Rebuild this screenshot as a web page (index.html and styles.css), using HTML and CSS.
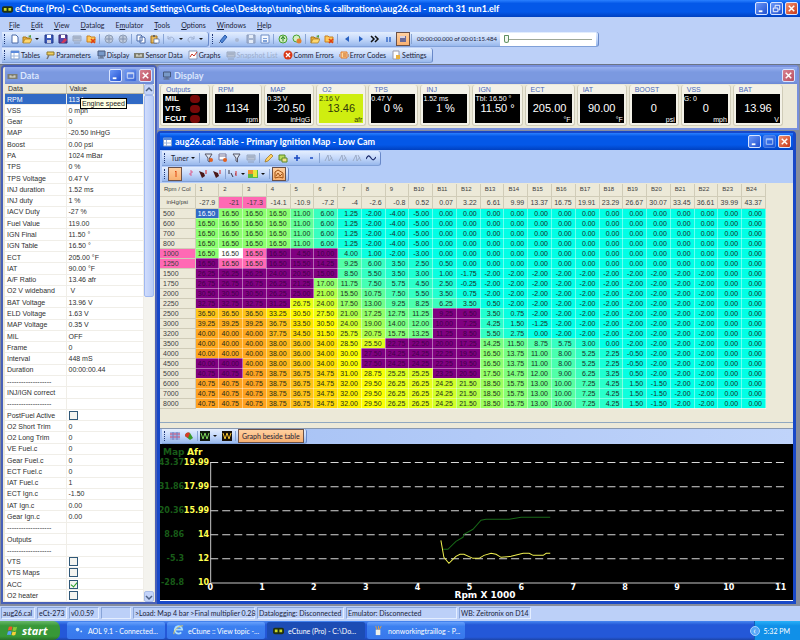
FILE: index.html
```html
<!DOCTYPE html>
<html lang="en">
<head>
  <meta charset="UTF-8">
  <meta name="viewport" content="width=device-width, initial-scale=1.0">
  <title>eCtune (Pro)</title>
  <link rel="stylesheet" href="styles.css">
</head>
<body>
  <svg class="sprite" aria-hidden="true">
    <symbol id="i-new" viewBox="0 0 10 10"><path d="M2 1h4l2 2v6H2z" fill="#fff" stroke="#4a6aa8"/></symbol>
    <symbol id="i-open" viewBox="0 0 10 10"><path d="M1 9V3h3l1 1h3v2" fill="#e8b040" stroke="#a87818"/><path d="M1 9l2-4h7L8 9z" fill="#ffd870" stroke="#a87818" stroke-width=".7"/><path d="M6 2l3-1v3" fill="#50a040"/></symbol>
    <symbol id="i-openx" viewBox="0 0 10 10"><path d="M1 8V2h3l1 1h4v5z" fill="#ffc858" stroke="#c88020"/><path d="M5 5l4 4M9 5L5 9" stroke="#e04010" stroke-width="1.6"/></symbol>
    <symbol id="i-save" viewBox="0 0 10 10"><path d="M1 1h8v8H1z" fill="#3b58b8" stroke="#23388a"/><path d="M3 1h4v3H3z" fill="#fff"/><path d="M3 6h4v3H3z" fill="#ccd"/></symbol>
    <symbol id="i-savegray" viewBox="0 0 10 10"><path d="M1 1h8v8H1z" fill="#a4b4d0" stroke="#8c9cbc"/><path d="M3 1h4v3H3zM3 6h4v3H3z" fill="#e4ecf8"/></symbol>
    <symbol id="i-saveas" viewBox="0 0 10 10"><path d="M1 1h8v8H1z" fill="#5848a8" stroke="#33286a"/><path d="M3 1h4v3H3z" fill="#fff"/><path d="M3 9l4-5 2 2-3 3z" fill="#d03858"/></symbol>
    <symbol id="i-gray" viewBox="0 0 10 10"><path d="M1 2h8v5H1z" fill="#b9c3d4" stroke="#9aa8c0"/><path d="M2 4h6M2 9h6" stroke="#93a2bb"/></symbol>
    <symbol id="i-chip" viewBox="0 0 10 10"><circle cx="5" cy="5" r="4" fill="#c0cbdc" stroke="#8c9cb6"/><path d="M5 2v6M2 5h6" stroke="#8292ae"/></symbol>
    <symbol id="i-copy" viewBox="0 0 10 10"><path d="M1 1h4l1 1v5H1zM4 3h4l1 1v5H4z" fill="#fff" stroke="#4a6aa8"/></symbol>
    <symbol id="i-paste" viewBox="0 0 10 10"><path d="M1 2h6v7H1z" fill="#e8b858" stroke="#a07020"/><path d="M3 1h2v2H3z" fill="#666"/><path d="M4 5h5v4H4z" fill="#fff" stroke="#4a6aa8" stroke-width=".7"/></symbol>
    <symbol id="i-undo" viewBox="0 0 10 10"><path d="M2 2v3h3M2 5c2-3 6-2 6 1 0 1-1 2-2 2" fill="none" stroke="#9fb0d0"/></symbol>
    <symbol id="i-redo" viewBox="0 0 10 10"><path d="M8 2v3H5M8 5c-2-3-6-2-6 1 0 1 1 2 2 2" fill="none" stroke="#9fb0d0"/></symbol>
    <symbol id="i-plug" viewBox="0 0 10 10"><path d="M1 9l2-2" stroke="#667"/><path d="M2 7l5-6 2 2-5 6z" fill="#4f86d6" stroke="#2a5aa8"/></symbol>
    <symbol id="i-dot" viewBox="0 0 10 10"><circle cx="5" cy="6" r="2" fill="#a9b8d2"/></symbol>
    <symbol id="i-note" viewBox="0 0 10 10"><path d="M1 1h8v8H1z" fill="#f4f8ff" stroke="#6d8cc4"/><path d="M3 4h4v1H3zM3 6h4v2H3z" fill="#7da0d8"/></symbol>
    <symbol id="i-go" viewBox="0 0 10 10"><circle cx="5" cy="5" r="4" fill="#d4eec0" stroke="#48a030"/><path d="M5 2.500v5M3 5l2-2.500L7 5" fill="none" stroke="#208020"/></symbol>
    <symbol id="i-nogo" viewBox="0 0 10 10"><circle cx="4.500" cy="4.500" r="3.500" fill="#d4eec0" stroke="#48a030"/><circle cx="7" cy="7" r="2.500" fill="#e08030"/></symbol>
    <symbol id="i-prev" viewBox="0 0 10 10"><path d="M7 2v6L3 5z" fill="#2860c0"/></symbol>
    <symbol id="i-next" viewBox="0 0 10 10"><path d="M3 2v6l4-3z" fill="#2860c0"/></symbol>
    <symbol id="i-ff" viewBox="0 0 10 10"><path d="M1 2l3 3-3 3M5 2l3 3-3 3" fill="none" stroke="#111" stroke-width="1.500"/></symbol>
    <symbol id="i-pause" viewBox="0 0 10 10"><path d="M3 3v5M6 3v5" stroke="#3a6cc8" stroke-width="1.500"/></symbol>
    <symbol id="i-stop" viewBox="0 0 10 10"><path d="M2 2h6v6H2z" fill="#6a6a98"/><path d="M2 2h5v2H2z" fill="#d8d0e0"/></symbol>
    <symbol id="i-grid" viewBox="0 0 10 10"><path d="M1 1h8v8H1z" fill="#fff" stroke="#7f9cc8"/><path d="M1 1h8v2H1z" fill="#5b8adb"/><path d="M1 6h8M4 3v6" stroke="#9db6dc"/></symbol>
    <symbol id="i-param" viewBox="0 0 10 10"><path d="M2 2h7v3H2z" fill="#f0d060" stroke="#907828"/><path d="M4 5l-2 4" stroke="#777" stroke-width="1.500"/></symbol>
    <symbol id="i-disp" viewBox="0 0 10 10"><path d="M2 1h7v5H2z" fill="#7899c8" stroke="#46597c"/><path d="M2 8h6M4 7h3" stroke="#56657f"/></symbol>
    <symbol id="i-sensor" viewBox="0 0 10 10"><path d="M0 3h10v5H0z" fill="#7d7d70"/><path d="M2 5h2M6 5h2M2 6h6" stroke="#e8e8d8"/></symbol>
    <symbol id="i-graph" viewBox="0 0 10 10"><path d="M1 1h8v8H1z" fill="#fff" stroke="#8899b8"/><path d="M2 7l2-3 2 2 3-4" fill="none" stroke="#c83828"/></symbol>
    <symbol id="i-err" viewBox="0 0 10 10"><circle cx="5" cy="5" r="4.500" fill="#d83818"/><path d="M3 3l4 4M7 3L3 7" stroke="#fff" stroke-width="1.300"/></symbol>
    <symbol id="i-code" viewBox="0 0 10 10"><path d="M2 2h6v6H2z" fill="#ffd8a0" stroke="#e07828"/><path d="M0 4v3M10 4v3M4 4h3M4 6h3" stroke="#c86018"/></symbol>
    <symbol id="i-page" viewBox="0 0 10 10"><path d="M2 1h6v8H2z" fill="#fff" stroke="#99a"/><path d="M5 5h4v4H5z" fill="#e8b040"/></symbol>
    <symbol id="i-filter" viewBox="0 0 10 10"><path d="M1 1h7L5.500 5v4L4 8V5z" fill="#dfe6f2" stroke="#556"/></symbol>
    <symbol id="i-filterx" viewBox="0 0 10 10"><path d="M1 1h7L5.500 5v4L4 8V5z" fill="#dfe6f2" stroke="#556"/><circle cx="7" cy="7" r="2" fill="#e06020"/></symbol>
    <symbol id="i-gridx" viewBox="0 0 10 10"><path d="M1 1h7v6H1z" fill="#fff" stroke="#779"/><path d="M1 3h7" stroke="#779"/><circle cx="7" cy="7" r="2" fill="#e06020"/></symbol>
    <symbol id="i-pencil" viewBox="0 0 10 10"><path d="M1 9l1-3 5-5 2 2-5 5z" fill="#ffd060" stroke="#a07828" stroke-width=".8"/></symbol>
    <symbol id="i-map" viewBox="0 0 10 10"><path d="M1 2h6v5H1z" fill="#b8dc60" stroke="#5a8828"/><path d="M4 5h5v4H4z" fill="#f4e088" stroke="#5a8828"/></symbol>
    <symbol id="i-plus" viewBox="0 0 10 10"><path d="M2 5h6M5 2v6" stroke="#1848c0" stroke-width="1.500"/></symbol>
    <symbol id="i-minus" viewBox="0 0 10 10"><path d="M4 5h3" stroke="#1848c0" stroke-width="1.500"/></symbol>
    <symbol id="i-cut" viewBox="0 0 10 10"><path d="M1 8l3-6 1 6 3-4M6 2l3 6" fill="none" stroke="#9cabc6"/></symbol>
    <symbol id="i-wave" viewBox="0 0 10 10"><path d="M0 6c2-4 3-4 5-1s3 2 5-1" fill="none" stroke="#182868" stroke-width="1.200"/></symbol>
    <symbol id="i-one" viewBox="0 0 10 10"><path d="M5 3l1-1v6" fill="none" stroke="#e04810"/></symbol>
    <symbol id="i-two" viewBox="0 0 10 10"><path d="M6 2h2v2H6v2h2" fill="none" stroke="#e04878" stroke-width=".8"/></symbol>
    <symbol id="i-cam" viewBox="0 0 10 10"><path d="M1 2l5 2 1 3-3 2z" fill="#4a1818"/><path d="M8 1v4" stroke="#d82020"/></symbol>
    <symbol id="i-cur" viewBox="0 0 10 10"><path d="M1 1v4M3 4l2 4M7 5h1" stroke="#334"/><path d="M8 2v5" stroke="#d82020"/></symbol>
    <symbol id="i-heat" viewBox="0 0 10 10"><path d="M0 1h10v8H0z" fill="#58b848"/><path d="M0 1h5v4H0z" fill="#f09030"/><path d="M5 1h4v7H5z" fill="#e8e838"/></symbol>
    <symbol id="i-3d" viewBox="0 0 10 10"><path d="M1 3l3-2 5 3v5L5 8 1 9z" fill="none" stroke="#a05010"/><path d="M2 7l2-3 2 3 2-2" fill="none" stroke="#a05010"/></symbol>
    <symbol id="i-surf" viewBox="0 0 10 10"><path d="M0 1h10v8H0z" fill="#9fb0e0"/><path d="M0 3h10M0 6h10" stroke="#e05070"/><path d="M3 1v8M7 1v8" stroke="#6880c8"/></symbol>
    <symbol id="i-ball" viewBox="0 0 10 10"><path d="M1 5c0-4 4-4 5-3l3 5-3 2z" fill="#389828"/><path d="M1 5c0-4 4-4 5-3L4 7z" fill="#d83828"/></symbol>
    <symbol id="i-scope" viewBox="0 0 10 10"><path d="M0 0h10v10H0z" fill="#101810"/><path d="M1 2l2 6 2-6 2 6 2-6" fill="none" stroke="#78d058"/></symbol>
    <symbol id="i-scopey" viewBox="0 0 10 10"><path d="M0 0h10v10H0z" fill="#181008"/><path d="M1 2l2 6 2-6 2 6 2-6" fill="none" stroke="#f0c030"/></symbol>
    <symbol id="i-app" viewBox="0 0 12 10"><rect y="2" width="12" height="7" rx="2" fill="#203010"/><path d="M2 4h3v3H2zM7 4h3v3H7z" fill="#c8d828"/></symbol>
    <symbol id="i-flag" viewBox="0 0 12 12"><path d="M2 2q2-1 4 0L5 6Q3 5 1 6z" fill="#f05828"/><path d="M7 2q2 1 4 0l-1 4q-2 1-4 0z" fill="#88cc38"/><path d="M1 7q2-1 4 0l-1 4q-2-1-4 0z" fill="#58a0f8"/><path d="M6 7q2 1 4 0l-1 4q-2 1-4 0z" fill="#f8d038"/></symbol>
    <symbol id="i-ie" viewBox="0 0 12 12"><path d="M9 8a4 4 0 1 1 1-3H3" fill="none" stroke="#a8dcff" stroke-width="2"/><path d="M1 10C0 6 7 0 11 1" fill="none" stroke="#f0d050"/></symbol>
    <symbol id="i-aol" viewBox="0 0 12 12"><circle cx="5" cy="5" r="2" fill="#d0e8ff"/><circle cx="9" cy="7" r="1" fill="#d0e8ff"/></symbol>
    <symbol id="i-paint" viewBox="0 0 12 12"><path d="M3 5h5v6H3z" fill="#f0f0e8"/><path d="M4 5L3 1M6 5V1M7 5l2-4" stroke="#e0a040"/></symbol>
    <symbol id="i-min" viewBox="0 0 12 12"><path d="M3 9h4" stroke="#fff" stroke-width="2"/></symbol>
    <symbol id="i-max" viewBox="0 0 12 12"><path d="M2.500 3h7v6h-7zM2.500 4h7" fill="none" stroke="#fff"/></symbol>
    <symbol id="i-rest" viewBox="0 0 12 12"><path d="M4.500 5V2.500h5v5H8M2.500 5.500h5v4h-5z" fill="none" stroke="#fff"/></symbol>
    <symbol id="i-close" viewBox="0 0 12 12"><path d="M3 3l6 6M9 3L3 9" stroke="#fff" stroke-width="1.600"/></symbol>
  </svg>

  <header class="titlebar main-title">
    <svg class="app-icon"><use href="#i-app"/></svg>
    <h1>eCtune (Pro) - C:\Documents and Settings\Curtis Coles\Desktop\tuning\bins &amp; calibrations\aug26.cal - march 31 run1.elf</h1>
    <button class="win-btn" aria-label="Minimize"><svg><use href="#i-min"/></svg></button>
    <button class="win-btn" aria-label="Restore"><svg><use href="#i-rest"/></svg></button>
    <button class="win-btn close" aria-label="Close"><svg><use href="#i-close"/></svg></button>
  </header>

  <nav class="menu">
    <a href="#"><u>F</u>ile</a><a href="#"><u>E</u>dit</a><a href="#"><u>V</u>iew</a><a href="#"><u>D</u>atalog</a><a href="#">E<u>m</u>ulator</a><a href="#"><u>T</u>ools</a><a href="#"><u>O</u>ptions</a><a href="#"><u>W</u>indows</a><a href="#"><u>H</u>elp</a>
  </nav>

  <div class="bar-row">
    <div class="toolbar" data-icons="new open* save saveas gray openx | chip chip | copy paste | undo* redo*"></div>
    <div class="toolbar" data-icons="plug dot savegray note | go nogo | open openx | prev next ff pause stop! |">
      <label class="time" for="seek">00:00:00.000 of 00:01:15.484</label>
      <input type="range" id="seek" min="0" max="75" value="0">
    </div>
  </div>
  <div class="bar-row">
    <div class="toolbar labelled">
      <button><svg><use href="#i-grid"/></svg>Tables</button>
      <button><svg><use href="#i-param"/></svg>Parameters</button>
      <button><svg><use href="#i-disp"/></svg>Display</button>
      <button><svg><use href="#i-sensor"/></svg>Sensor Data</button>
      <button><svg><use href="#i-graph"/></svg>Graphs</button>
      <button disabled><svg><use href="#i-gray"/></svg>Snapshot List</button>
      <button><svg><use href="#i-err"/></svg>Comm Errors</button>
      <button><svg><use href="#i-code"/></svg>Error Codes</button>
      <button><svg><use href="#i-page"/></svg>Settings</button>
    </div>
  </div>

  <main class="mdi">
    <section class="window inactive data-window">
      <div class="titlebar">
        <svg class="app-icon"><use href="#i-sensor"/></svg>
        <h2>Data</h2>
        <button class="win-btn" aria-label="Minimize"><svg><use href="#i-min"/></svg></button>
        <button class="win-btn dim" aria-label="Maximize"><svg><use href="#i-max"/></svg></button>
        <button class="win-btn close" aria-label="Close"><svg><use href="#i-close"/></svg></button>
      </div>
      <div class="data-body">
        <table class="data-table">
          <thead><tr><th>Data</th><th>Value</th></tr></thead>
          <tbody id="dataRows"></tbody>
        </table>
        <div class="scroll">
          <button aria-label="Scroll up"><svg viewBox="0 0 8 8"><path d="M1 5l3-3 3 3" fill="none" stroke="#4d6185" stroke-width="1.500"/></svg></button>
          <div class="thumb"></div>
          <button aria-label="Scroll down"><svg viewBox="0 0 8 8"><path d="M1 3l3 3 3-3" fill="none" stroke="#4d6185" stroke-width="1.500"/></svg></button>
        </div>
        <div class="tooltip">Engine speed</div>
      </div>
    </section>

    <div class="right">
      <section class="window inactive">
        <div class="titlebar">
          <svg class="app-icon"><use href="#i-disp"/></svg>
          <h2>Display</h2>
          <button class="win-btn close" aria-label="Close"><svg><use href="#i-close"/></svg></button>
        </div>
        <div class="gauges" id="gauges">
          <div class="group">
            <h3>Outputs</h3>
            <ul class="outputs"><li>MIL</li><li>VTS</li><li>FCUT</li></ul>
          </div>
        </div>
      </section>

      <section class="window active table-window">
        <div class="titlebar">
          <svg class="app-icon"><use href="#i-grid"/></svg>
          <h2>aug26.cal: Table - Primary Ignition Map - Low Cam</h2>
          <button class="win-btn" aria-label="Minimize"><svg><use href="#i-min"/></svg></button>
          <button class="win-btn dim" aria-label="Maximize"><svg><use href="#i-max"/></svg></button>
          <button class="win-btn close" aria-label="Close"><svg><use href="#i-close"/></svg></button>
        </div>
        <div class="table-tools">
          <div class="toolbar" data-icons="Tuner* | filterx gridx filter gray | pencil map plus minus | cut cut cut wave"></div>
          <div class="toolbar" data-icons="one! two cam cam | cur* heat* | 3d!"></div>
        </div>
        <div class="map-area">
          <table class="map">
            <thead id="mapHead"></thead>
            <tbody id="mapRows"></tbody>
          </table>
        </div>
        <div class="graph-tools">
          <div class="toolbar" data-icons="surf ball | scope* scopey |"><button class="on text">Graph beside table</button></div>
        </div>
        <svg class="chart" id="chart" viewBox="0 0 631 156" role="img" aria-label="Map and Afr by rpm"></svg>
      </section>
    </div>
  </main>

  <footer class="status">
    <span>aug26.cal</span><span>eCt-273</span><span>v0.0.59</span><span></span><span>&gt;Load: Map 4 bar &gt;Final multiplier 0.28</span><span>Datalogging: Disconnected</span><span>Emulator: Disconnected</span><span>WB: Zeitronix on D14</span>
  </footer>

  <div class="taskbar">
    <button class="start"><svg><use href="#i-flag"/></svg>start</button>
    <button class="task"><svg><use href="#i-aol"/></svg>AOL 9.1 - Connected...</button>
    <button class="task"><svg><use href="#i-ie"/></svg>eCtune :: View topic -...</button>
    <button class="task current"><svg><use href="#i-app"/></svg>eCtune (Pro) - C:\Do...</button>
    <button class="task"><svg><use href="#i-paint"/></svg>nonworkingtraillog - P...</button>
    <div class="tray"><button class="expand" aria-label="Show hidden icons">&lsaquo;</button><time>5:32 PM</time></div>
  </div>

  <script src="script.js"></script>
</body>
</html>
```
FILE: styles.css
```css
* {
  box-sizing: border-box;
}
body {
  margin: 0;
  min-height: 100vh;
  display: flex;
  flex-direction: column;
  background: #bcd0f8;
  font-family: Lato, "Open Sans", sans-serif;
  font-size: 7px;
  line-height: 10px;
  color: #1a2238;
}
h1, h2, h3, ul {
  margin: 0;
  padding: 0;
  font: inherit;
}
button {
  font: inherit;
  color: inherit;
  background: none;
  border: 0;
  padding: 0;
}
.sprite {
  display: none;
}

/* title bars */
.titlebar {
  display: flex;
  align-items: center;
  gap: 2px;
  height: 17px;
  padding: 0 2px;
  background: linear-gradient(#2a80ff, #0458e8 20%, #0458e8 70%, #0040c0);
  color: #fff;
  font-weight: bold;
  font-size: 9px;
  line-height: 14px;
  white-space: nowrap;
}
.titlebar h1, .titlebar h2 {
  flex: 1;
  overflow: hidden;
}
.app-icon {
  width: 11px;
  height: 10px;
}
.win-btn {
  width: 13px;
  height: 13px;
  border: 1px solid #d8e4ff;
  border-radius: 2px;
  background: linear-gradient(135deg, #6c98f8, #2050d0);
}
.win-btn svg {
  display: block;
  width: 11px;
  height: 11px;
}
.win-btn.close {
  background: linear-gradient(135deg, #f09070, #c83818);
}
.inactive .win-btn.close {
  background: linear-gradient(135deg, #d88090, #b85060);
}
.win-btn.dim {
  border-color: #6c94e8;
  opacity: 0.7;
}

/* menu and toolbars */
.menu {
  display: flex;
  height: 15px;
  padding: 3px 9px 0;
  gap: 11px;
}
.menu a {
  color: #1a2238;
  text-decoration: none;
}
.bar-row {
  display: flex;
  gap: 1px;
  height: 16px;
  padding-left: 2px;
}
.toolbar {
  display: flex;
  align-items: center;
  height: 15px;
  padding-right: 2px;
  background: linear-gradient(#e4eefe, #c4d8fa 50%, #98b8ec);
  border-right: 1px solid #6888c8;
  border-bottom: 1px solid #80a0d8;
  border-radius: 0 3px 3px 0;
}
.toolbar::before {
  content: "";
  width: 1px;
  height: 10px;
  margin: 0 2px;
  border-left: 1px dotted #203878;
}
.toolbar button {
  display: flex;
  align-items: center;
  justify-content: center;
  min-width: 14px;
  height: 14px;
  white-space: nowrap;
}
.toolbar button svg {
  width: 10px;
  height: 10px;
  flex: none;
}
.toolbar .drop {
  padding-right: 3px;
}
.toolbar .drop::after {
  content: "";
  margin-left: 3px;
  border: 2px solid transparent;
  border-top-color: #111;
  border-bottom: 0;
}
.toolbar .on {
  background: linear-gradient(#ffd0a0, #f8b070);
  border: 1px solid #6a5048;
}
.toolbar .text {
  padding: 0 3px;
}
.toolbar hr {
  width: 1px;
  height: 10px;
  margin: 0 2px 0 1px;
  border: 0;
  background: #88a4d4;
}
.labelled button {
  padding: 0 3px 0 2px;
  gap: 1px;
}
.labelled button:disabled {
  color: #9aaccb;
}
.time {
  padding: 0 3px;
  font-size: 6px;
}
#seek {
  appearance: none;
  width: 96px;
  height: 13px;
  margin: 0;
  padding: 0 4px;
  background: #fff;
}
#seek::-webkit-slider-runnable-track {
  height: 1px;
  background: #a0a898;
}
#seek::-webkit-slider-thumb {
  appearance: none;
  width: 5px;
  height: 8px;
  margin-top: -4px;
  background: #f4f8f0;
  border: 1px solid #609060;
  border-radius: 1px 1px 3px 3px;
}

/* windows */
.mdi {
  flex: 1;
  display: flex;
  padding: 0 1px 2px;
  background: #858c9c;
  border-top: 1px solid #6c7484;
}
.window {
  display: flex;
  flex-direction: column;
  border: 2px solid #7890dc;
  border-radius: 4px 4px 0 0;
  background: #ece9d8;
}
.inactive > .titlebar {
  background: linear-gradient(#98b0f0, #7b99e0 30%, #7b99e0 80%, #6c88d4);
  color: #dce6fc;
}
.window.active {
  border: 3px solid #1848c8;
  border-top-width: 2px;
}
.right {
  flex: 1;
  min-width: 0;
  display: flex;
  flex-direction: column;
}

/* sensor list */
.data-window {
  width: 156px;
  padding: 0 1px 0 2px;
  border-color: #4860b8;
}
.data-body {
  position: relative;
  flex: 1;
  display: flex;
  background: #fff;
}
.data-table {
  flex: 1;
  border-collapse: collapse;
  table-layout: fixed;
  font-family: "Liberation Sans", sans-serif;
  line-height: 9px;
  color: #303030;
}
.data-table th {
  background: #ece9d8;
  border-bottom: 1px solid #b8b4a0;
  border-right: 1px solid #c8c4b0;
  text-align: left;
  font-weight: normal;
  padding: 0 3px;
}
.data-table td {
  padding: 0 2px;
  border: 1px solid #f0eee8;
  border-left: 0;
  white-space: nowrap;
}
.data-table th:first-child {
  width: 61px;
}
.data-table .selected td {
  background: #316ac5;
  color: #fff;
}
.data-table input {
  appearance: none;
  display: block;
  width: 9px;
  height: 9px;
  margin: 0;
  border: 1px solid #305878;
  background: #f4f4f0;
}
.data-table input:checked::before {
  content: "";
  display: block;
  width: 3px;
  height: 5px;
  margin: 0 2px;
  border: solid #28a028;
  border-width: 0 1px 1px 0;
  transform: rotate(40deg);
}
.scroll {
  width: 10px;
  display: flex;
  flex-direction: column;
  background: #f4f3ee;
}
.scroll button {
  height: 11px;
  background: #c4d4fa;
  border: 1px solid #a8bce8;
  border-radius: 2px;
}
.scroll svg {
  display: block;
  width: 8px;
  height: 8px;
}
.thumb {
  height: 202px;
  margin-bottom: auto;
  background: linear-gradient(90deg, #d0dcfc, #b8ccf8);
  border: 1px solid #a0b8f0;
  border-radius: 2px;
}
.tooltip {
  position: absolute;
  left: 75px;
  top: 14px;
  padding: 0 1px;
  background: #ffffe1;
  border: 1px solid #000;
  color: #222;
  font-family: "Liberation Sans", sans-serif;
  line-height: 9px;
}

/* gauges */
.gauges {
  display: flex;
  gap: 2px;
  padding: 1px 14px 2px 1px;
  font-family: "Liberation Sans", sans-serif;
}
.group {
  flex: 1;
  min-width: 0;
  padding: 0 2px 2px;
  border: 1px solid #d0ccb8;
  border-top: 0;
  border-radius: 3px;
  background: #f4f2e8;
}
.group h3 {
  padding-left: 3px;
  color: #4868b8;
  line-height: 9px;
}
.gauge, .outputs {
  height: 29px;
  background: #000;
  color: #fff;
}
.gauge {
  display: grid;
  grid-template-rows: 7px 14px 8px;
  line-height: 9px;
  white-space: nowrap;
}
.gauge strong {
  text-align: center;
  font-size: 11px;
  font-weight: normal;
  line-height: 14px;
}
.gauge em {
  font-style: normal;
  text-align: right;
  padding-right: 1px;
}
.gauge.lime {
  background: #cfee10;
  color: #303808;
}
.outputs {
  list-style: none;
  padding: 0 7px 0 2px;
  font-size: 8px;
  font-weight: bold;
}
.outputs li {
  display: flex;
  align-items: center;
  justify-content: space-between;
}
.outputs li::after {
  content: "";
  width: 10px;
  height: 8px;
  border-radius: 4px;
  background: #780808;
}

/* ignition map */
.table-window {
  flex: 1;
  margin: 1px 3px 0 0;
}
.table-tools {
  display: flex;
  flex-direction: column;
  align-items: flex-start;
  gap: 1px;
  padding: 1px 2px;
  background: #b4ccf8;
}
.map-area {
  flex: 1;
  padding: 1px 27px 12px 0;
  border-bottom: 1px solid #90a8c0;
}
.map {
  width: 100%;
  border-collapse: collapse;
  table-layout: fixed;
  font-family: "Liberation Sans", sans-serif;
  line-height: 9px;
  color: #1c2c1c;
}
.map th, .map td {
  height: 10px;
  padding: 0 3px 0 0;
  border-right: 1px solid rgba(255, 255, 255, 0.4);
  border-bottom: 1px solid rgba(255, 255, 255, 0.4);
  text-align: right;
  font-weight: normal;
  white-space: nowrap;
}
.map th {
  background: #ece9d8;
  border-color: #d0ccb8;
  color: #404040;
}
.map thead th {
  height: 12px;
}
.map thead tr:first-child th {
  padding-left: 4px;
  text-align: left;
  font-size: 6px;
}
.map th:first-child {
  width: 35px;
  padding-left: 3px;
  text-align: left;
}
.map thead tr th:first-child {
  padding: 0;
  text-align: center;
  font-size: 6px;
}
.map .pink {
  background: #ff69b4;
}
.map .logged {
  background: #800080;
  color: #400048;
}
.map .cell-on {
  background: #316ac5;
  color: #fff;
}
.map .cell-now {
  background: #fff;
}

/* graph */
.graph-tools {
  margin-top: 5px;
  padding-left: 2px;
  display: flex;
  background: linear-gradient(90deg, #a4c0f4, #c0d4fa);
  border-top: 1px solid #8898b0;
}
.chart {
  display: block;
  width: 100%;
  background: #000;
  border-bottom: 1px solid #fff;
  font-family: "DejaVu Sans", sans-serif;
  font-weight: bold;
  font-size: 8px;
}
.chart .title {
  font-size: 9px;
}
.chart .map-label {
  fill: #185c18;
}
.chart .afr-label {
  fill: #ffff50;
}
.chart .x-label {
  fill: #fff;
}
.chart .axis {
  stroke: #c8c8c8;
}
.chart .dashes {
  stroke: #d8d8d8;
  stroke-dasharray: 8 4;
}
.chart polyline {
  fill: none;
}
.chart .map-line {
  stroke: #186818;
}
.chart .afr-line {
  stroke: #f0f050;
}

/* bottom bars */
.status {
  display: flex;
  gap: 2px;
  height: 15px;
  padding: 1px;
}
.status span {
  width: 30px;
  height: 12px;
  padding-left: 1px;
  border: 1px solid #88a4d8;
  border-right-color: #e4eeff;
  border-bottom-color: #e4eeff;
  white-space: nowrap;
}
.status span:nth-child(1) {
  width: 34px;
}
.status span:nth-child(5) {
  width: 122px;
}
.status span:nth-child(6) {
  width: 87px;
}
.status span:nth-child(7) {
  width: 111px;
}
.status span:nth-child(8) {
  width: 72px;
}
.taskbar {
  display: flex;
  height: 19px;
  gap: 2px;
  background: linear-gradient(#4888f0, #2458d8 20%, #2458d8 85%, #1c44a8);
  color: #fff;
}
.taskbar svg {
  width: 11px;
  height: 11px;
  flex: none;
}
.start {
  display: flex;
  align-items: center;
  gap: 4px;
  width: 60px;
  margin-right: 5px;
  padding-left: 7px;
  background: linear-gradient(#68b868, #389838 25%, #389838 80%, #287028);
  border-radius: 0 7px 7px 0;
  font-family: "Open Sans", sans-serif;
  font-size: 11px;
  font-weight: bold;
  font-style: italic;
}
.task {
  display: flex;
  align-items: center;
  gap: 4px;
  width: 98px;
  margin: 1px 0;
  padding-left: 6px;
  background: linear-gradient(#68a0fc, #3c80f0 25%, #3878ec);
  border-radius: 2px;
  white-space: nowrap;
}
.task.current {
  background: #1c4cb4;
}
.tray {
  display: flex;
  align-items: center;
  gap: 4px;
  margin-left: auto;
  padding-right: 10px;
  background: linear-gradient(#28b0f8, #1090e8 25%, #1090e8);
  border-left: 1px solid #1060b8;
}
.expand {
  width: 10px;
  height: 10px;
  margin-left: -5px;
  border-radius: 5px;
  background: #58a8f8;
  border: 1px solid #a8d4ff;
  font-size: 9px;
  line-height: 6px;
}
```
FILE: script.js
```js
const SVG_NS = "http://www.w3.org/2000/svg";

// Toolbars: "|" is a separator, "*" adds a drop arrow, "!" is pressed
document.querySelectorAll("[data-icons]").forEach((bar) => {
  const html = bar.dataset.icons.split(" ").map((item) => {
    if (item === "|") return "<hr>";
    const name = item.replace(/[*!]/, "");
    let cls = "";
    if (item.endsWith("*")) cls = "drop";
    if (item.endsWith("!")) cls = "on";
    if (name === "Tuner") return `<button class="${cls} text">Tuner</button>`;
    return `<button class="${cls}" aria-label="${name}"><svg><use href="#i-${name}"/></svg></button>`;
  }).join("");
  bar.insertAdjacentHTML("afterbegin", html);
});

// Sensor list
const sensors = [
  ["RPM", "1134"], ["VSS", "0 mph"], ["Gear", "0"], ["MAP", "-20.50 inHgG"], ["Boost", "0.00 psi"],
  ["PA", "1024 mBar"], ["TPS", "0 %"], ["TPS Voltage", "0.47 V"], ["INJ duration", "1.52 ms"],
  ["INJ duty", "1 %"], ["IACV Duty", "-27 %"], ["Fuel Value", "119.00"], ["IGN Final", "11.50 °"],
  ["IGN Table", "16.50 °"], ["ECT", "205.00 °F"], ["IAT", "90.00 °F"], ["A/F Ratio", "13.46 afr"],
  ["O2 V wideband", "&nbsp;V"], ["BAT Voltage", "13.96 V"], ["ELD Voltage", "1.63 V"], ["MAP Voltage", "0.35 V"],
  ["MIL", "OFF"], ["Frame", "0"], ["Interval", "448 mS"], ["Duration", "00:00:00.44"],
  ["-------------------", ""], ["INJ/IGN correct", ""], ["-------------------", ""],
  ["PostFuel Active", false], ["O2 Short Trim", "0"], ["O2 Long Trim", "0"], ["VE Fuel.c", "0"],
  ["Gear Fuel.c", "0"], ["ECT Fuel.c", "0"], ["IAT Fuel.c", "1"], ["ECT Ign.c", "-1.50"],
  ["IAT Ign.c", "0.00"], ["Gear Ign.c", "0.00"],
  ["-------------------", ""], ["Outputs", ""], ["-------------------", ""],
  ["VTS", false], ["VTS Maps", false], ["ACC", true], ["O2 heater", false],
];
document.getElementById("dataRows").innerHTML = sensors.map(([name, value], i) => {
  if (typeof value === "boolean") {
    return `<tr><td><label for="s${i}">${name}</label></td><td><input type="checkbox" id="s${i}"${value ? " checked" : ""}></td></tr>`;
  }
  return `<tr${i === 0 ? ' class="selected"' : ""}><td>${name}</td><td>${value}</td></tr>`;
}).join("");

// Gauges: label, top text, value, unit
const gauges = [
  ["RPM", "", "1134", "rpm"], ["MAP", "0.35 V", "-20.50", "inHgG"], ["O2", "2.16 V", "13.46", "afr"],
  ["TPS", "0.47 V", "0 %", ""], ["INJ", "1.52 ms", "1 %", ""], ["IGN", "Tbl: 16.50 °", "11.50 °", ""],
  ["ECT", "", "205.00", "°F"], ["IAT", "", "90.00", "°F"], ["BOOST", "", "0", "psi"],
  ["VSS", "G: 0", "0", "mph"], ["BAT", "", "13.96", "V"],
];
document.getElementById("gauges").insertAdjacentHTML("beforeend", gauges.map(([label, note, value, unit]) => `
  <div class="group">
    <h3>${label}</h3>
    <div class="gauge${label === "O2" ? " lime" : ""}"><span>${note}</span><strong>${value}</strong><em>${unit}</em></div>
  </div>`).join(""));

// Ignition map, "p" marks the cells already logged
const load = "-27.9 -21 -17.3 -14.1 -10.9 -7.2 -4 -2.6 -0.8 0.52 0.07 3.22 6.61 9.99 13.37 16.75 19.91 23.29 26.67 30.07 33.45 36.61 39.99 43.37".split(" ");
const lowRpm = "16.5 16.5 16.5 16.5 11 6 1.25 -2 -4 -5 0 0 0 0 0 0 0 0 0 0 0 0 0 0";
const highRpm = "40.75 40.75 40.75 38.75 36.75 34.75 32 29.5 26.25 26.25 24.25 21.5 18.5 15.75 13 10 7.25 4.25 1.5 -1.5 -2 -2 0 0";
const ignition = [
  [500, lowRpm], [600, lowRpm], [700, lowRpm], [800, lowRpm],
  [1000, "16.5 16.5 16.5 p16.5 p4.5 p10 4 1 -2 -3 0 0 0 0 0 0 0 0 0 0 0 0 0 0"],
  [1250, "p16.5 16.5 16.5 p16.5 p15.5 p14.25 9.25 6 3.5 2.5 0.5 0 0 0 0 0 0 0 0 0 0 0 0 0"],
  [1500, "p26.25 p26.25 p26.25 p24 p20.5 p15 8.5 5.5 3.5 3 1 -1.75 -2 -2 -2 -2 -2 -2 -2 -2 -2 -2 0 0"],
  [1750, "p26.75 p26.75 p26.75 p26.25 p21.25 17 11.75 7.5 5.75 4.5 2.5 -0.25 -2 -2 -2 -2 -2 -2 -2 -2 -2 -2 0 0"],
  [2000, "p30.5 p30.5 p30.5 p26.25 p25 21 15.5 10.75 7.5 5.5 3.5 0.75 -2 -2 -2 -2 -2 -2 -2 -2 -2 -2 0 0"],
  [2250, "p32.75 p32.75 p32.75 p31.25 26.75 24 17.5 13 9.25 8.25 6.25 3.5 0.5 -2 -2 -2 -2 -2 -2 -2 -2 -2 0 0"],
  [2500, "36.5 36.5 36.5 33.25 30.5 27.5 21 17.25 12.75 11.25 p9.25 p6.5 3.5 0.75 -2 -2 -2 -2 -2 -2 -2 -2 0 0"],
  [3000, "39.25 39.25 39.25 36.75 33.5 30.5 24 19 14 12 p10 p7.25 4.25 1.5 -1.25 -2 -2 -2 -2 -2 -2 -2 0 0"],
  [3200, "40 40 40 37.75 34.5 31.5 25.75 20.75 15.75 13.25 p11.25 p8.5 5.5 2.75 0 -2 -2 -2 -2 -2 -2 -2 0 0"],
  [3500, "40 40 40 38 36 34 28.5 25.5 p22.75 p22.5 p20 p17.25 14.25 11.5 8.75 5.75 3 0 -2 -2 -2 -2 0 0"],
  [4000, "40 40 40 38 36 34 30 p27.5 p24.25 p24.25 p22.25 p19.5 16.5 13.75 11 8 5.25 2.25 -0.5 -2 -2 -2 0 0"],
  [4500, "p40 p40 40 38 36 34 30 p27.5 p24.25 p24.25 p22.25 p19.5 16.5 13.75 11 8 5.25 2.25 -0.5 -2 -2 -2 0 0"],
  [5000, "p40.75 p40.75 40.75 38.75 36.75 34.75 31 28.75 25.25 25.25 p23.25 p20.5 17.5 14.75 12 9 6.25 3.25 0.5 -2 -2 -2 0 0"],
  [6000, highRpm], [7000, highRpm], [8000, highRpm],
];

const stops = [
  [0, 0, 255, 230], [6, 56, 255, 192], [11, 96, 255, 152], [16.5, 140, 255, 112],
  [21, 176, 255, 72], [26, 228, 255, 24], [30, 255, 255, 0], [34, 255, 224, 0],
  [36.5, 255, 196, 24], [41, 255, 160, 32],
];

function heat(value) {
  if (value <= 0) return "rgb(0, 255, 230)";
  const i = stops.findIndex((s) => s[0] >= value);
  const a = stops[i - 1];
  const b = stops[i];
  const t = (value - a[0]) / (b[0] - a[0]);
  const mix = (n) => Math.round(a[n] + (b[n] - a[n]) * t);
  return `rgb(${mix(1)}, ${mix(2)}, ${mix(3)})`;
}

document.getElementById("mapHead").innerHTML =
  "<tr><th>Rpm / Col</th>" + load.map((_, i) => `<th>${i > 8 ? "B" : ""}${i + 1}</th>`).join("") + "</tr>" +
  "<tr><th>inHg/psi</th>" + load.map((v, i) => `<th${i === 1 || i === 2 ? ' class="pink"' : ""}>${v}</th>`).join("") + "</tr>";

document.getElementById("mapRows").innerHTML = ignition.map(([rpm, line]) => {
  const near = rpm === 1000 || rpm === 1250;
  const cells = line.split(" ").map((cell, col) => {
    const logged = cell.startsWith("p");
    const value = parseFloat(cell.replace("p", ""));
    let cls = "";
    if (logged) cls = "logged";
    else if (rpm === 500 && col === 0) cls = "cell-on";
    else if (rpm === 1000 && col === 1) cls = "cell-now";
    else if (near && (col === 1 || col === 2)) cls = "pink";
    if (cls) return `<td class="${cls}">${value.toFixed(2)}</td>`;
    return `<td style="background: ${heat(value)}">${value.toFixed(2)}</td>`;
  }).join("");
  return `<tr><th${near ? ' class="pink"' : ""}>${rpm}</th>${cells}</tr>`;
}).join("");

// Chart
const chart = document.getElementById("chart");

function add(tag, attrs, text) {
  const el = document.createElementNS(SVG_NS, tag);
  for (const key in attrs) el.setAttribute(key, attrs[key]);
  if (text !== undefined) el.textContent = text;
  chart.appendChild(el);
}

const axisX = 50;
const axisY = 138;
const mapScale = ["43.37", "31.86", "20.36", "8.86", "-5.3", "-28.8"];
const afrScale = ["19.99", "17.99", "15.99", "14", "12", "10"];

add("text", { x: 3, y: 11, class: "title map-label" }, "Map");
add("text", { x: 27, y: 11, class: "title afr-label" }, "Afr");
mapScale.forEach((label, i) => {
  const y = 18 + i * 24;
  add("text", { x: 24, y: y + 3, "text-anchor": "end", class: "map-label" }, label);
  add("text", { x: 49, y: y + 3, "text-anchor": "end", class: "afr-label" }, afrScale[i]);
  if (i < 5) add("line", { x1: axisX, x2: 624, y1: y + 0.5, y2: y + 0.5, class: "dashes" });
});
add("line", { x1: axisX + 0.5, x2: axisX + 0.5, y1: 18, y2: axisY, class: "axis" });
add("line", { x1: axisX, x2: 619, y1: axisY + 0.5, y2: axisY + 0.5, class: "axis" });
for (let i = 0; i <= 11; i++) {
  add("text", { x: axisX + i * 51.7, y: 146, "text-anchor": "middle", class: "x-label" }, i);
}
add("text", { x: 324, y: 154, "text-anchor": "middle", class: "title x-label" }, "Rpm X 1000");
add("polyline", { class: "map-line", points: "282,105 287,105 295,97 302,93 303,90 312,85 320,76 325,75 348,75 360,73 389,73" });
add("polyline", { class: "afr-line", points: "280,96 283,113 288,119 295,112 299,110 303,110 312,114 318,114 323,111 330,109 335,110 340,113 350,112 362,109 368,109 372,111 382,111 385,109 389,109" });
```
